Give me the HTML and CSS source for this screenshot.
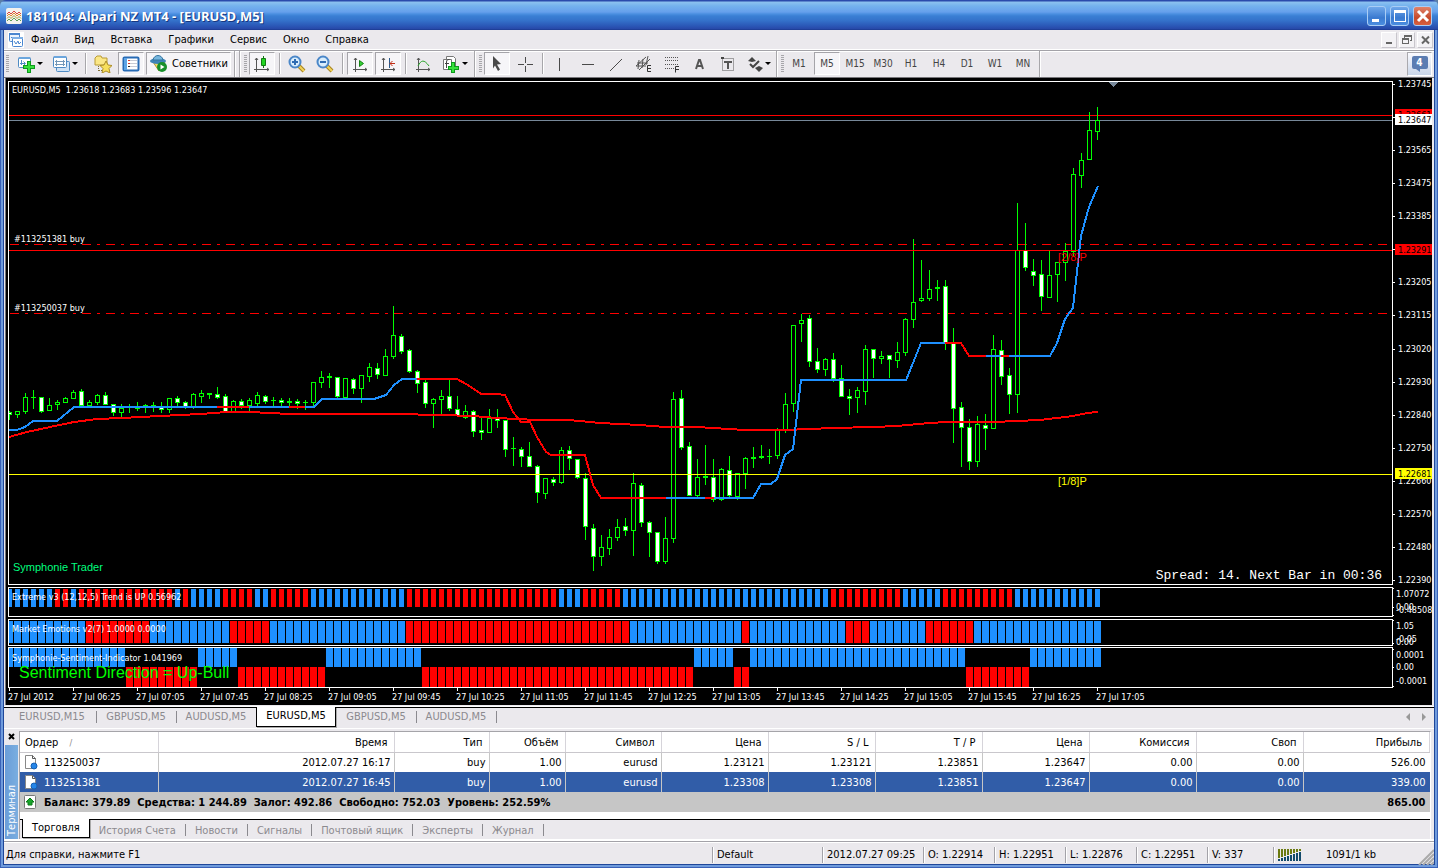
FILE: index.html
```html
<!DOCTYPE html>
<html lang="ru">
<head>
<meta charset="utf-8">
<title>181104: Alpari NZ MT4 - [EURUSD,M5]</title>
<link rel="stylesheet" href="styles.css">
</head>
<body>
<div class="window">
  <header class="titlebar">
    <svg class="app-icon" width="16" height="16" viewBox="0 0 16 16"><rect width="16" height="16" rx="2" fill="#f4f2ee"/><g fill="none" stroke-width="1"><path d="M1 6l2-2 2 2 3-3 3 3 2-2 2 2" stroke="#d8473a"/><path d="M1 8l2-2 2 2 3-3 3 3 2-2 2 2" stroke="#e0872f"/><path d="M1 10.500l2-2 2 2 3-3 3 3 2-2 2 2" stroke="#a6a23c"/><path d="M1 13l2-2 2 2 3-3 3 3 2-2 2 2" stroke="#5fa05a"/></g></svg>
    <h1 class="title">181104: Alpari NZ MT4 - [EURUSD,M5]</h1>
    <div class="window-buttons">
      <button class="wbtn" aria-label="Свернуть"><svg width="18" height="18"><path d="M4 12h7v3H4z" fill="#fff"/></svg></button>
      <button class="wbtn" aria-label="Развернуть"><svg width="18" height="18"><path d="M3 3h12v12H3zM4 6v8h10V6z" fill="#fff" fill-rule="evenodd"/></svg></button>
      <button class="wbtn wbtn-close" aria-label="Закрыть"><svg width="18" height="18"><path d="M4 4l10 10M14 4L4 14" stroke="#fff" stroke-width="3"/></svg></button>
    </div>
  </header>

  <div class="frame"><div class="client">
    <nav class="menubar">
      <svg class="menu-icon" width="16" height="16" viewBox="0 0 16 16"><rect width="16" height="16" fill="#fff"/><rect x="1.500" y="1.500" width="10" height="8" rx="1" fill="#eaf3fd" stroke="#4a86d0"/><path d="M1 2h11" stroke="#4a86d0" stroke-width="2"/><path d="M3 6l1-1 1 2 2-2" fill="none" stroke="#4a86d0"/><rect x="4.500" y="5.500" width="10" height="9" rx="1" fill="#fff" stroke="#4a86d0"/><path d="M4 6h11" stroke="#7fb0e6" stroke-width="2"/><path d="M6 9l2 3 2-3 1 3 2-2" fill="none" stroke="#4a86d0"/></svg>
      <button class="menu">Файл</button><button class="menu">Вид</button><button class="menu">Вставка</button><button class="menu">Графики</button><button class="menu">Сервис</button><button class="menu">Окно</button><button class="menu">Справка</button>
      <div class="mdi-buttons">
        <button class="mdi" aria-label="Свернуть окно"><svg width="15" height="15"><path d="M4 9h6v2H4z" fill="#666"/></svg></button>
        <button class="mdi" aria-label="Восстановить окно"><svg width="15" height="15"><path d="M4 2h8v6h-2V7h1V4H5v1H4z" fill="#666"/><path d="M2 5h7v6H2zM3 7v3h5V7z" fill="#666" fill-rule="evenodd"/></svg></button>
        <button class="mdi" aria-label="Закрыть окно"><svg width="15" height="15"><path d="M4 3.500l7 7M11 3.500l-7 7" stroke="#666" stroke-width="2"/></svg></button>
      </div>
    </nav>

    <div class="toolbar">
      <span class="grip"></span>
      <button class="tool drop" aria-label="Новый график"><svg width="18" height="18"><rect x="1.500" y="2.500" width="12" height="10" rx="1" fill="#fff" stroke="#4f8bc4"/><path d="M2 3h11" stroke="#6ca6dd" stroke-width="2"/><path d="M4.500 5v5M3 8.500h5M6.500 6.500l2 2-2 2" fill="none" stroke="#4f8bc4"/><path d="M10 6h4v4h4v4h-4v4h-4v-4H6v-4h4z" fill="#0c9a1c"/><path d="M11 7h2v4h4v2h-4v4h-2v-4H7v-2h4z" fill="#37e03c"/></svg></button>
      <button class="tool drop" aria-label="Профили"><svg width="18" height="18"><rect x="4.500" y="6.500" width="13" height="10" rx="1" fill="#cfe2f5" stroke="#4f8bc4"/><rect x="1.500" y="1.500" width="13" height="11" rx="1" fill="#fff" stroke="#4f8bc4"/><path d="M2 2h12" stroke="#6ca6dd" stroke-width="2"/><path d="M3 6.500h10M3 9.500h10M4.500 5v6M11.500 5v6" stroke="#7397b8"/></svg></button>
      <span class="sep"></span>
      <button class="tool" aria-label="Обзор рынка"><svg width="18" height="18"><path d="M1 3l2-2h4l1 2h5v7H1z" fill="#fbe787" stroke="#b99b35"/><path d="M4.500 11v6M5 15.500h4" stroke="#806e30" stroke-dasharray="1 1"/><path d="M12 6l2 4 4 .5-3 3 1 4.500-4-2-4 2 1-4.500-3-3 4-.5z" fill="#f7df5c" stroke="#ac8c26"/></svg></button>
      <button class="tool on" aria-label="Навигатор"><svg width="18" height="18"><rect x="1.500" y="2.500" width="15" height="13" rx="1" fill="#fff" stroke="#276bb5" stroke-width="2"/><path d="M2 3h3v12H2z" fill="#5da4e6"/><path d="M8 5.500h7M8 8.500h7M8 11.500h7" stroke="#c7cad4"/><path d="M6 5.500h2M6 8.500h2" stroke="#d43b2e"/><path d="M6 11.500h2" stroke="#222"/></svg></button>
      <button class="tool on advisers"><svg width="20" height="18"><path d="M4 7h12l-6 9z" fill="#f5dc68" stroke="#b4922c"/><ellipse cx="9" cy="6" rx="8" ry="3" fill="#3e83b7"/><path d="M4 5c1-6 9-6 10 0z" fill="#77b7df" stroke="#33749f"/><circle cx="13" cy="12" r="5" fill="#18902b"/><path d="M11.500 9.500v5l4-2.500z" fill="#fff"/></svg>Советники</button>
      <span class="edge"></span><span class="edge"></span><span class="grip"></span>
      <button class="tool on" aria-label="Свечи"><svg width="18" height="18"><path d="M3.500 3v14M1 14.500h15M2 5l1.500-2L5 5M14 13l2 1.500-2 1.500" fill="none" stroke="#555"/><path d="M10.500 1v12" stroke="#127a12"/><path d="M8.500 3.500h4v7h-4z" fill="#22d522" stroke="#127a12"/></svg></button>
      <span class="sep"></span>
      <button class="tool" aria-label="Приблизить"><svg width="18" height="18"><path d="M10 10l6 6" stroke="#a88420" stroke-width="4"/><path d="M10 10l6 6" stroke="#f2d358" stroke-width="2"/><circle cx="7" cy="7" r="5.500" fill="#d9edfc" stroke="#4b87c8" stroke-width="2"/><path d="M4 7h6M7 4v6" stroke="#2f6cb2" stroke-width="2"/></svg></button>
      <button class="tool" aria-label="Отдалить"><svg width="18" height="18"><path d="M10 10l6 6" stroke="#a88420" stroke-width="4"/><path d="M10 10l6 6" stroke="#f2d358" stroke-width="2"/><circle cx="7" cy="7" r="5.500" fill="#d9edfc" stroke="#4b87c8" stroke-width="2"/><path d="M4 7h6" stroke="#2f6cb2" stroke-width="2"/></svg></button>
      <span class="sep"></span>
      <button class="tool on" aria-label="Автопрокрутка"><svg width="18" height="18"><path d="M4.500 3v14M2 14.500h14M3 5l1.500-2L6 5M14 13l2 1.500-2 1.500" fill="none" stroke="#555"/><path d="M8.500 5.500v6l4-3z" fill="#35d135" stroke="#148014"/></svg></button>
      <button class="tool on" aria-label="Сдвиг графика"><svg width="18" height="18"><path d="M4.500 3v14M2 14.500h14M3 5l1.500-2L6 5M14 13l2 1.500-2 1.500" fill="none" stroke="#555"/><path d="M10.500 3v10" stroke="#2a5a8c"/><path d="M11 8.500h5M13.500 6L11 8.500l2.500 2.500" fill="none" stroke="#c02c14"/></svg></button>
      <span class="sep"></span>
      <button class="tool" aria-label="Индикаторы"><svg width="18" height="18"><path d="M4.500 3v14M2 14.500h14M3 5l1.500-2L6 5M14 13l2 1.500-2 1.500" fill="none" stroke="#555"/><path d="M4 11c3-6 6-7 11 0" fill="none" stroke="#29a329"/></svg></button>
      <button class="tool drop" aria-label="Шаблоны"><svg width="18" height="18"><path d="M4.500 1.500h7l2 2v11h-9z" fill="#fff" stroke="#777"/><path d="M1.500 4.500h8v10h-8z" fill="#fff" stroke="#777"/><path d="M4.500 13V7c0-2 1-2.500 3-2.500M3 8.500h4" fill="none" stroke="#444"/><path d="M9 7h4v4h4v4h-4v3H9v-3H6v-4h3z" fill="#0c9a1c"/><path d="M10 8h2v4h4v2h-4v3h-2v-3H7v-2h3z" fill="#37e03c"/></svg></button>
      <span class="edge"></span><span class="grip"></span>
      <button class="tool on" aria-label="Курсор"><svg width="18" height="18"><path d="M5 1l8 8-4 .5 3 5-2 1.500-3-5.500-2 3z" fill="#4a4a4a"/></svg></button>
      <button class="tool" aria-label="Перекрестие"><svg width="18" height="18"><path d="M2 9.500h6M11 9.500h6M9.500 2v6M9.500 11v6" stroke="#4a4a4a"/></svg></button>
      <span class="sep"></span>
      <button class="tool" aria-label="Вертикальная линия"><svg width="18" height="18"><path d="M8.500 3v13" stroke="#4a4a4a"/></svg></button>
      <button class="tool" aria-label="Горизонтальная линия"><svg width="18" height="18"><path d="M3 9.500h12" stroke="#4a4a4a"/></svg></button>
      <button class="tool" aria-label="Трендовая линия"><svg width="18" height="18"><path d="M3 16L15 4" stroke="#4a4a4a"/></svg></button>
      <button class="tool" aria-label="Канал"><svg width="18" height="18"><path d="M1 11L11 2M4 15L15 4M2 8h11M1 11h10M4 5l-1 9M8 4l-1 9M13 1l-2 9" stroke="#555" fill="none"/><path d="M16 10.500h-3.500v6H16M13 13.500h3" stroke="#333" fill="none"/></svg></button>
      <button class="tool" aria-label="Фибоначчи"><svg width="18" height="18"><path d="M2 2.500h14M2 5.500h14M2 9.500h14M2 13.500h9" stroke="#555" stroke-dasharray="1 1"/><path d="M16 11.500h-3.500v6M13 14.500h3" stroke="#333" fill="none"/></svg></button>
      <button class="tool" aria-label="Текст"><svg width="18" height="18"><path d="M5 14l3-9h1l3 9M6 11h5" fill="none" stroke="#555" stroke-width="2"/></svg></button>
      <button class="tool" aria-label="Текстовая метка"><svg width="18" height="18"><rect x="3.500" y="3.500" width="11" height="12" fill="none" stroke="#555" stroke-dasharray="1 1"/><path d="M2 2h3v2H2z" fill="#444"/><path d="M5 7h8M9 7v7" stroke="#555" stroke-width="2"/></svg></button>
      <button class="tool drop arrows" aria-label="Стрелки"><svg width="18" height="18"><path d="M2 6l4-4 4 4-4 1zM9 13l4-2 4 2-4 4z" fill="#444"/><path d="M4 9l3 3 6-6" fill="none" stroke="#444" stroke-width="2"/></svg></button>
      <span class="edge"></span><span class="grip"></span>
      <button class="tool tf">M1</button><button class="tool tf on">M5</button><button class="tool tf">M15</button><button class="tool tf">M30</button><button class="tool tf">H1</button><button class="tool tf">H4</button><button class="tool tf">D1</button><button class="tool tf">W1</button><button class="tool tf">MN</button>
      <span class="edge"></span>
      <button class="notice"><span class="bubble">4</span></button>
    </div>

    <main class="chart">
      <section class="pane pane-price">
        <svg class="plot" id="price"></svg>
        <svg class="axis" id="price-axis"></svg>
        <p class="countdown">Spread: 14. Next Bar in 00:36</p>
      </section>
      <section class="pane pane-extreme"><svg class="plot" id="extreme"></svg><svg class="axis" id="extreme-axis"></svg></section>
      <section class="pane pane-emotion"><svg class="plot" id="emotion"></svg><svg class="axis" id="emotion-axis"></svg></section>
      <section class="pane pane-sentiment"><svg class="plot" id="sentiment"></svg><svg class="axis" id="sentiment-axis"></svg></section>
      <svg class="times" id="times"></svg>
    </main>

    <div class="chart-tabs">
      <button class="ctab wide">EURUSD,M15</button><button class="ctab">GBPUSD,M5</button><button class="ctab last">AUDUSD,M5</button><button class="ctab current">EURUSD,M5</button><button class="ctab">GBPUSD,M5</button><button class="ctab">AUDUSD,M5</button>
      <svg class="scrollers" width="22" height="9"><path d="M5 0v8L1 4z" fill="#999"/><path d="M17 0v8l4-4z" fill="#999"/></svg>
    </div>

    <section class="terminal">
      <div class="side">
        <button class="side-close" aria-label="Закрыть терминал"><svg width="9" height="8"><path d="M2 1l5 5M7 1L2 6" stroke="#000" stroke-width="2"/></svg></button>
        <span class="side-label">Терминал</span>
      </div>
      <div class="terminal-body">
        <table class="orders">
          <colgroup><col class="c-order"><col class="c-time"><col class="c-type"><col class="c-vol"><col class="c-sym"><col class="c-num"><col class="c-num"><col class="c-num"><col class="c-num"><col class="c-num"><col class="c-num"><col></colgroup>
          <thead><tr><th class="first">Ордер <span class="sort">/</span></th><th>Время</th><th>Тип</th><th>Объём</th><th>Символ</th><th>Цена</th><th>S / L</th><th>T / P</th><th>Цена</th><th>Комиссия</th><th>Своп</th><th>Прибыль</th></tr></thead>
          <tbody>
            <tr><td class="first"><svg width="16" height="16"><path d="M2.500 1.500h7l3 3v10h-10z" fill="#fff" stroke="#888"/><path d="M9.500 1.500v3h3" fill="none" stroke="#555"/><circle cx="11" cy="12" r="3" fill="#2585e8" stroke="#1560b4"/></svg>113250037</td><td>2012.07.27 16:17</td><td>buy</td><td>1.00</td><td>eurusd</td><td>1.23121</td><td>1.23121</td><td>1.23851</td><td>1.23647</td><td>0.00</td><td>0.00</td><td>526.00</td></tr>
            <tr class="selected"><td class="first"><svg width="16" height="16"><path d="M2.500 1.500h7l3 3v10h-10z" fill="#fff" stroke="#888"/><path d="M9.500 1.500v3h3" fill="none" stroke="#555"/><circle cx="11" cy="12" r="3" fill="#2585e8" stroke="#1560b4"/></svg>113251381</td><td>2012.07.27 16:45</td><td>buy</td><td>1.00</td><td>eurusd</td><td>1.23308</td><td>1.23308</td><td>1.23851</td><td>1.23647</td><td>0.00</td><td>0.00</td><td>339.00</td></tr>
          </tbody>
          <tfoot><tr><td class="first" colspan="11"><svg width="16" height="16"><rect x="1.500" y="1.500" width="11" height="13" rx="1" fill="#fff" stroke="#777"/><path d="M7 4l4 4H9v3H5V8H3z" fill="#19a42a" stroke="#0b7a18"/></svg>Баланс: 379.89&nbsp; Средства: 1 244.89&nbsp; Залог: 492.86&nbsp; Свободно: 752.03&nbsp; Уровень: 252.59%</td><td>865.00</td></tr></tfoot>
        </table>
        <div class="term-tabs">
          <button class="ttab current">Торговля</button><button class="ttab">История Счета</button><button class="ttab">Новости</button><button class="ttab">Сигналы</button><button class="ttab">Почтовый ящик</button><button class="ttab">Эксперты</button><button class="ttab">Журнал</button>
        </div>
      </div>
    </section>

    <footer class="statusbar">
      <span class="st st-help">Для справки, нажмите F1</span>
      <span class="st st-profile">Default</span>
      <span class="st st-date">2012.07.27 09:25</span>
      <span class="st st-val">O: 1.22914</span>
      <span class="st st-val">H: 1.22951</span>
      <span class="st st-val">L: 1.22876</span>
      <span class="st st-val">C: 1.22951</span>
      <span class="st st-vol">V: 337</span>
      <span class="st st-net"><svg width="24" height="12" id="signal"></svg>1091/1 kb
        <svg class="resize" width="16" height="16"><path d="M16 1L1 16M16 5L5 16M16 9L9 16M16 13l-3 3" stroke="#aaa" stroke-width="2"/></svg>
      </span>
    </footer>
  </div></div>
</div>
<script src="chart.js"></script>
</body>
</html>
```

FILE: styles.css
```css
* { box-sizing: border-box; }
body { margin: 0; background: #5b7fa8; color: #000; font: 11px/14px "DejaVu Sans Condensed", "DejaVu Sans", Tahoma, sans-serif; }
button { font: inherit; color: inherit; background: none; border: 0; padding: 0; margin: 0; }
svg { display: block; flex: none; }
.window { display: flex; flex-direction: column; min-height: 100vh; }

.titlebar { display: flex; align-items: center; height: 30px; padding: 3px 6px 0; border-radius: 6px 6px 0 0; border-bottom: 1px solid #1f3f98;
  background: linear-gradient(#2a4bac 0 1px, #8cc2f0 2px, #74b2ee 6px, #66a0ec 12px, #4a8fe0 14px, #3a7fd4 16px, #3574cc 20px, #2c5cba 25px, #2748a8 29px); }
.title { flex: 1; margin: 0 0 0 4px; font: bold 13px/18px "Open Sans", "Noto Sans", sans-serif; color: #fff; text-shadow: 1px 1px #17377f; white-space: nowrap; }
.window-buttons { display: flex; gap: 4px; }
.wbtn { width: 19px; height: 20px; border: 1px solid #a9cdf5; border-radius: 3px; background: linear-gradient(#70a8ea, #3a7ad0 60%, #4b8ee0); }
.wbtn-close { background: linear-gradient(#e0836a, #c54a2c 60%, #d8603f); }

.frame { flex: 1; display: flex; border: solid #3a62b8; border-width: 0 1px 1px; padding: 0 2px 2px; background: #6f9bdc; }
.client { flex: 1; min-width: 0; display: flex; flex-direction: column; border: solid #1f4799; border-width: 0 1px 1px; background: #ebe9ed; }

.menubar { display: flex; align-items: center; height: 20px; padding-left: 4px; }
.menu-icon { margin-right: -1px; }
.menu { padding: 0 8px; height: 18px; }
.mdi-buttons { display: flex; gap: 2px; margin-left: auto; margin-right: 1px; }
.mdi { width: 16px; height: 16px; background: #f3f2f5; border: 1px solid; border-color: #fff #c8c6cc #c8c6cc #fff; }

.toolbar { display: flex; align-items: center; gap: 2px; height: 28px; padding: 0 2px 1px 1px; border-top: 1px solid #a3a2a8; border-bottom: 1px solid #77767a; box-shadow: inset 0 1px #fff, 0 -1px #fff; }
.grip { flex: none; width: 3px; height: 18px; margin-left: 1px; background: repeating-linear-gradient(#a7a6aa 0 1px, #ebe9ed 1px 2px); }
.grip:first-child { margin-right: 2px; }
.tool { display: flex; align-items: center; justify-content: center; flex: none; width: 26px; height: 23px; border: 1px solid transparent; }
.tool.on { background: #f6f5f8; border-color: #a5a4a9 #fff #fff #a5a4a9; }
.tool.drop { width: 33px; gap: 2px; }
.tool.arrows { width: 30px; gap: 1px; }
.tool.drop::after { content: ""; border: solid transparent; border-width: 3px 3px 0; border-top-color: #000; }
.tool.advisers { width: 85px; gap: 3px; }
.tf { color: #444; font-size: 10px; }
.sep { flex: none; width: 2px; height: 21px; margin: 0 1px 0 2px; border-left: 1px solid #a7a6aa; border-right: 1px solid #fff; }
.edge { flex: none; width: 2px; height: 26px; margin-left: 1px; border-left: 1px solid #a7a6aa; border-right: 1px solid #fff; }
.notice { display: flex; align-items: center; justify-content: center; width: 25px; height: 24px; margin-left: auto; border: 1px solid #aaa9ae; border-right-color: #fff; border-bottom-color: #fff; background: linear-gradient(#fafaff, #c9d5e8); }
.bubble { position: relative; width: 16px; height: 13px; margin-bottom: 3px; border-radius: 2px; background: #5b7cb2; color: #fff; font: bold 10px/13px "DejaVu Sans Condensed", sans-serif; }
.bubble::after { content: ""; position: absolute; left: 4px; top: 13px; border: solid transparent; border-width: 0 0 3px 4px; border-top: 3px solid #5b7cb2; }

.chart { flex: 1; display: flex; flex-direction: column; margin: 0 2px 0 1px; padding: 3px 0 0 2px; border-left: 1px solid #77767a; background: #000; }
.pane { position: relative; display: flex; }
.plot { flex: 1; min-width: 0; border: 1px solid #fff; height: 100%; }
.axis { width: 39px; height: 100%; overflow: visible; }
.pane-price { flex: 1; min-height: 504px; margin-bottom: 2px; }
.pane-price .plot, .pane-price .axis { height: auto; }
.pane-extreme { height: 30px; margin-bottom: 2px; }
.pane-emotion { height: 27px; margin-bottom: 1px; }
.pane-sentiment { height: 41px; }
.times { width: 100%; height: 17px; overflow: visible; }
.plot, .axis, .times { shape-rendering: crispEdges; font-size: 9px; fill: #fff; }
.countdown { position: absolute; right: 50px; bottom: 2px; margin: 0; color: #fff; font: 13px/14px "Liberation Mono", monospace; }
.lime { fill: #0f0; }
.up { fill: #000; }
.down { fill: #fff; }
.trend { fill: none; stroke-width: 2; }
.buy-color { stroke: #1e90ff; }
.sell-color { stroke: #f00; }
.bar-b { fill: #1e90ff; }
.bar-r { fill: #f00; }
.order { stroke: #f00; stroke-dasharray: 9 6 3 6; }
.note { font-family: "Liberation Sans", sans-serif; font-size: 11px; }
.note-big { font-family: "Liberation Sans", sans-serif; font-size: 16px; fill: #0f0; }
.tick { stroke: #fff; }

.chart-tabs { display: flex; height: 22px; margin-top: 1px; padding: 0 12px 0 12px; border-top: 1px solid #fff; box-shadow: inset 0 1px #000, 0 1px #fff; }
.ctab { flex: none; width: 80px; height: 18px; margin-top: 1px; color: #8b8a8f; position: relative; line-height: 15px; padding-bottom: 2px; }
.ctab.wide { padding-right: 8px; }
.ctab::after { content: ""; position: absolute; right: -1px; top: 3px; height: 12px; border-right: 1px solid #8b8a8f; }
.ctab.last::after { display: none; }
.ctab.current { margin-top: 0; height: 20px; border: 1px solid #000; border-top: 0; background: #fff; color: #000; box-shadow: 1px 1px #aaa; }
.ctab.current::after { display: none; }
.scrollers { margin: 6px -5px 0 auto; }

.terminal { display: flex; height: 112px; margin-top: 1px; }
.side { display: flex; flex-direction: column; align-items: center; width: 15px; padding-top: 4px; }
.side-close { height: 8px; margin-bottom: 4px; }
.side-label { flex: 1; width: 13px; margin-bottom: 2px; padding-top: 3px; background: linear-gradient(90deg, #7aaee0, #6a9dd8); color: #fff; writing-mode: vertical-rl; transform: rotate(180deg); line-height: 13px; font-size: 11px; }
.terminal-body { flex: 1; min-width: 0; margin: 2px 3px 0 0; border: 1px solid #a5a4a9; border-right-color: #fff; border-bottom: 0; background: #fff; display: flex; flex-direction: column; }
.orders { width: 100%; border-collapse: collapse; table-layout: fixed; }
.c-order { width: 138px; } .c-time { width: 236px; } .c-type { width: 95px; } .c-vol { width: 76px; } .c-sym { width: 96px; } .c-num { width: 107px; }
.orders th { height: 20px; padding: 2px 6px 0; text-align: right; font-weight: normal; border-right: 1px solid #d6d4da; border-bottom: 1px solid #c9c7cc; line-height: 14px; }
.orders td { height: 20px; padding: 2px 3px 0; text-align: right; border-right: 1px solid #c6c6c6; white-space: nowrap; line-height: 14px; }
.orders th:last-child { padding-right: 7px; }
.orders td:last-child { padding-right: 4px; border-right: 0; }
.orders .first { text-align: left; padding-left: 3px; }
.orders th.first { padding-left: 5px; }
.orders td svg { display: inline-block; vertical-align: middle; margin: -2px 5px 0 0; }
.sort { margin-left: 8px; color: #888; font-size: 9px; }
.selected { background: #315da8; color: #fff; }
.orders tfoot { background: #c6c6c6; font-weight: bold; }
.term-tabs { display: flex; margin-top: auto; height: 22px; padding-left: 2px; border-top: 1px solid #000; background: #ebe9ed; }
.ttab { position: relative; height: 20px; padding: 1px 10px 0 9px; color: #8b8a8f; }
.ttab::after { content: ""; position: absolute; right: 0; top: 4px; height: 12px; border-right: 1px solid #8b8a8f; }
.ttab.current { height: 19px; margin-top: -1px; padding: 0 9px; border: 1px solid #000; border-top: 0; background: #fff; color: #000; box-shadow: 1px 1px #aaa; }
.ttab.current::after { display: none; }

.statusbar { display: flex; align-items: center; height: 23px; padding-top: 3px; border-top: 1px solid #a3a2a8; box-shadow: inset 0 1px #fff, 0 -2px #fff; }
.st { flex: none; height: 16px; padding-left: 4px; line-height: 16px; border-left: 1px solid #a3a2a8; box-shadow: inset 1px 0 #fff; white-space: nowrap; }
.st-help { flex: 1; padding-left: 2px; border: 0; box-shadow: none; }
.st-profile { width: 110px; } .st-date { width: 101px; } .st-val { width: 71px; } .st-vol { width: 66px; }
.st-net { position: relative; display: flex; align-items: center; gap: 24px; width: 161px; }
.resize { position: absolute; right: 0; bottom: -2px; }
```

FILE: chart.js
```js
const NS = 'http://www.w3.org/2000/svg';

function el(parent, tag, attrs, text) {
  const node = document.createElementNS(NS, tag);
  for (const key in attrs) node.setAttribute(key, attrs[key]);
  if (text !== undefined) node.textContent = text;
  parent.appendChild(node);
  return node;
}

function layer(id, dx, dy) {
  return el(document.getElementById(id), 'g', { transform: `translate(${-dx},${-dy})` });
}

const STEP = 8;
const FIRST = 9;

// Per bar: high, body top, body bottom, low; 1 marks a falling bar.
const bars = [
  [411,412,414,419,1],[411,411,414,417],[393,397,411,413],[390,397,397,408],[397,397,411,412,1],[398,405,410,410],[400,402,404,409],[397,398,402,402],
  [390,392,398,398],[389,391,405,405,1],[400,402,405,405],[394,395,402,404],[392,395,404,404,1],[404,404,412,415,1],[404,408,412,416],[404,407,407,412],
  [402,408,408,410],[404,405,407,412],[402,405,407,411],[402,407,409,412,1],[398,398,409,412],[396,398,402,405,1],[401,402,407,408,1],[393,394,406,408],
  [390,393,396,402],[393,393,394,398],[387,394,397,398,1],[394,396,411,412,1],[400,401,411,411],[399,401,405,408,1],[398,400,405,411],[392,395,403,405],
  [395,396,401,403,1],[397,400,400,405],[398,400,402,405,1],[398,401,402,405],[399,401,403,408,1],[400,402,402,409],[382,382,402,405],[371,377,382,387],
  [373,376,377,387],[377,377,396,397,1],[378,378,397,397],[378,379,388,393,1],[375,375,388,402],[363,367,376,381],[363,368,374,378,1],[349,356,375,375],
  [306,335,356,358],[334,336,351,353,1],[349,350,371,372,1],[370,371,383,392,1],[379,382,403,407,1],[398,399,403,427],[390,396,399,413],[379,396,408,410,1],
  [396,409,415,416,1],[405,411,417,418],[410,411,431,436,1],[417,430,432,439,1],[409,418,432,432],[409,418,420,427,1],[420,420,449,456,1],[437,448,448,465],
  [447,449,456,466,1],[442,456,466,466,1],[465,466,492,502,1],[478,478,493,498],[477,479,482,485,1],[447,450,482,483],[446,450,458,469,1],[459,459,477,478,1],
  [473,478,526,539,1],[524,528,556,570,1],[535,547,556,565],[529,537,548,554],[519,527,537,540],[518,526,530,535,1],[473,483,530,555],[483,485,522,526,1],
  [521,522,532,556,1],[532,532,561,563,1],[517,538,561,563],[392,399,538,542],[390,398,447,449,1],[442,446,495,495,1],[459,477,495,497],[445,476,477,484],
  [459,477,499,501,1],[468,469,499,500],[456,470,495,497,1],[473,473,496,499],[457,458,473,488],[447,457,458,467],[445,456,457,458],[449,456,456,463],
  [428,430,455,458],[393,404,430,432],[325,325,403,411],[314,320,323,341],[315,318,361,366,1],[348,361,369,372,1],[358,359,369,375],[353,359,378,381,1],
  [365,378,396,396,1],[389,396,398,414,1],[387,390,397,412],[345,349,391,404],[349,349,358,377,1],[351,356,358,363],[355,355,359,377,1],[342,352,360,367],
  [318,319,352,355],[239,302,319,327],[260,298,300,301],[270,289,298,300],[280,287,288,300],[280,286,342,349,1],[328,343,408,442,1],[402,407,427,466,1],
  [419,427,461,469,1],[416,424,461,466],[414,425,428,449,1],[335,349,428,428],[340,350,376,384,1],[368,375,394,413,1],[203,250,394,412],[223,250,267,270,1],
  [259,271,275,285,1],[260,274,296,310,1],[251,275,297,297],[262,262,274,301],[243,251,262,280],[168,174,251,255],[153,160,175,187],[112,130,159,159],[107,120,131,139]
];

const price = layer('price', 9, 82);

function level(y, color) {
  el(price, 'rect', { x: 9, y, width: 4000, height: 1, fill: color });
}

el(price, 'path', { d: 'M1109 82h9l-4.500 5z', fill: '#778899' });
[244, 313].forEach(y => el(price, 'path', { d: `M10 ${y + 0.5}H4000`, class: 'order' }));
level(120, '#778899');
level(115, '#f00');

bars.forEach(([high, top, bottom, low, falling], i) => {
  const x = FIRST + i * STEP;
  el(price, 'rect', { x, y: high, width: 1, height: low - high + 1, class: 'lime' });
  el(price, 'rect', { x: x - 2, y: top, width: 5, height: bottom - top + 1, class: 'lime' });
  if (bottom - top >= 2) el(price, 'rect', { x: x - 1, y: top + 1, width: 3, height: bottom - top - 1, class: falling ? 'down' : 'up' });
});

level(250, '#f00');
level(474, '#ff0');

const average = '9,437 27,432 50,427 74,422 97,419 122,418 160,416 200,414 227,412 250,412 290,414 395,414 441,415 473,416 497,418 537,420 569,420 600,423 640,425 665,427 697,427 745,430 785,430 833,428 873,427 897,426 930,423 947,422 993,422 1017,421 1040,420 1073,416 1087,413 1098,412';
el(price, 'polyline', { points: average, class: 'trend sell-color' });

const trend = [
  ['buy', '9,430 17,430 25,427 33,421 57,421 74,407 217,407'],
  ['sell', '217,407 249,407'],
  ['buy', '249,407 289,407'],
  ['sell', '289,407 305,407'],
  ['buy', '305,407 314,407 322,399 374,399 386,395 394,385 402,379 417,379'],
  ['sell', '417,379 457,379 468,385 481,394 497,394 505,395 513,412 521,422 530,422 537,437 546,452 551,455 585,455 593,485 601,498 666,498'],
  ['buy', '666,498 705,498'],
  ['sell', '705,498 714,498'],
  ['buy', '714,498 753,498 761,484 771,484 777,479 785,455 793,449 801,380 906,380 913,363 921,343 945,343'],
  ['sell', '945,343 961,343 969,356 986,356'],
  ['buy', '986,356 1001,356'],
  ['sell', '1001,356 1009,356'],
  ['buy', '1009,356 1050,356 1057,343 1065,319 1073,308 1081,236 1089,207 1098,186']
];
trend.forEach(([side, points]) => el(price, 'polyline', { points, class: `trend ${side}-color` }));

el(price, 'text', { x: 12, y: 93, style: 'white-space:pre' }, 'EURUSD,M5  1.23618 1.23683 1.23596 1.23647');
el(price, 'text', { x: 14, y: 242 }, '#113251381 buy');
el(price, 'text', { x: 14, y: 311 }, '#113250037 buy');
el(price, 'text', { x: 1058, y: 261, class: 'note bar-r' }, '[2/8]P');
el(price, 'text', { x: 1058, y: 485, class: 'note', fill: '#ff0' }, '[1/8]P');
el(price, 'text', { x: 13, y: 571, class: 'note', fill: '#00ff7f' }, 'Symphonie Trader');

// Price scale
const scale = layer('price-axis', 1393, 81);
const ticks = [['1.23745',84],['',117],['1.23565',150],['1.23475',183],['1.23385',216],['',249],['1.23205',282],['1.23115',315],['1.23020',349],['1.22930',382],['1.22840',415],['1.22750',448],['1.22660',481],['1.22570',514],['1.22480',547],['1.22390',580]];
ticks.forEach(([label, y]) => {
  el(scale, 'path', { d: `M1393 ${y + 0.5}h2`, class: 'tick' });
  el(scale, 'text', { x: 1398, y: y + 3 }, label);
});
[['1.23661',109,'#f00'],['1.23647',114,'#fff'],['1.23291',244,'#f00'],['1.22681',468,'#ff0']].forEach(([label, y, fill]) => {
  el(scale, 'rect', { x: 1395, y, width: 37, height: 11, fill });
  el(scale, 'text', { x: 1398, y: y + 9, fill: '#000' }, label);
});

// Indicator histograms: run lengths of bars sharing one colour
function runs(text, draw) {
  let i = 0;
  text.split(' ').forEach(part => {
    for (let n = +part.slice(1); n > 0; n--) draw(FIRST + STEP * i++, part[0]);
  });
}

const extreme = layer('extreme', 9, 588);
runs('b6 r2 b1 r12 b1 r1 b4 r4 b2 r5 b12 r19 b3 r5 b26 r9 b5 r9 b11', (x, c) => el(extreme, 'rect', { x: x - 2, y: 589, width: 5, height: 18, class: 'bar-' + c }));
el(extreme, 'text', { x: 12, y: 600 }, 'Extreme v3 (12,12,5) Trend is UP 0.56962');

const emotion = layer('emotion', 9, 620);
runs('b10 r8 b10 r5 b17 r28 b14 r1 b12 r3 b7 r6 b16', (x, c) => el(emotion, 'rect', { x: x - 3, y: 621, width: 7, height: 22, class: 'bar-' + c }));
el(emotion, 'text', { x: 12, y: 632 }, 'Market Emotions v2(7) 1.0000 0.0000');

const sentiment = layer('sentiment', 9, 648);
runs('b15 r9 b5 r11 b12 r34 b5 r2 b27 r8 b9', (x, c) => el(sentiment, 'rect', { x: x - 3, y: c === 'b' ? 648 : 667, width: 7, height: c === 'b' ? 19 : 20, class: 'bar-' + c }));
el(sentiment, 'text', { x: 12, y: 661 }, 'Symphonie-Sentiment-Indicator 1.041969');
el(sentiment, 'text', { x: 19, y: 678, class: 'note-big' }, 'Sentiment Direction = Up-Bull');

function sideScale(id, top, labels, marks) {
  const g = layer(id, 1393, top);
  labels.forEach(([label, y]) => el(g, 'text', { x: 1396, y }, label));
  marks.forEach(y => el(g, 'path', { d: `M1393 ${y + 0.5}h1`, class: 'tick' }));
}
sideScale('extreme-axis', 587, [['1.07072', 597], ['0.00', 610], ['-0.48508', 613]], [588, 607, 615]);
sideScale('emotion-axis', 619, [['1.05', 629], ['-0.05', 642], ['0.00', 645]], [620, 643]);
sideScale('sentiment-axis', 647, [['0.0001', 658], ['0.00', 670], ['-0.0001', 684]], [649, 667, 686]);

const times = layer('times', 8, 688);
['2012','06:25','07:05','07:45','08:25','09:05','09:45','10:25','11:05','11:45','12:25','13:05','13:45','14:25','15:05','15:45','16:25','17:05'].forEach((t, i) => {
  el(times, 'path', { d: `M${9.5 + 64 * i} 688v3`, class: 'tick' });
  el(times, 'text', { x: 8 + 64 * i, y: 700 }, '27 Jul ' + t);
});

// Connection strength in the status bar
const signal = document.getElementById('signal');
for (let i = 0; i < 8; i++) {
  const h = 2 + i;
  el(signal, 'rect', { x: i * 3, y: 0, width: 2, height: 11 - h, fill: '#6b7a10' });
  el(signal, 'rect', { x: i * 3, y: 12 - h, width: 2, height: h, fill: '#124a6b' });
}
```
